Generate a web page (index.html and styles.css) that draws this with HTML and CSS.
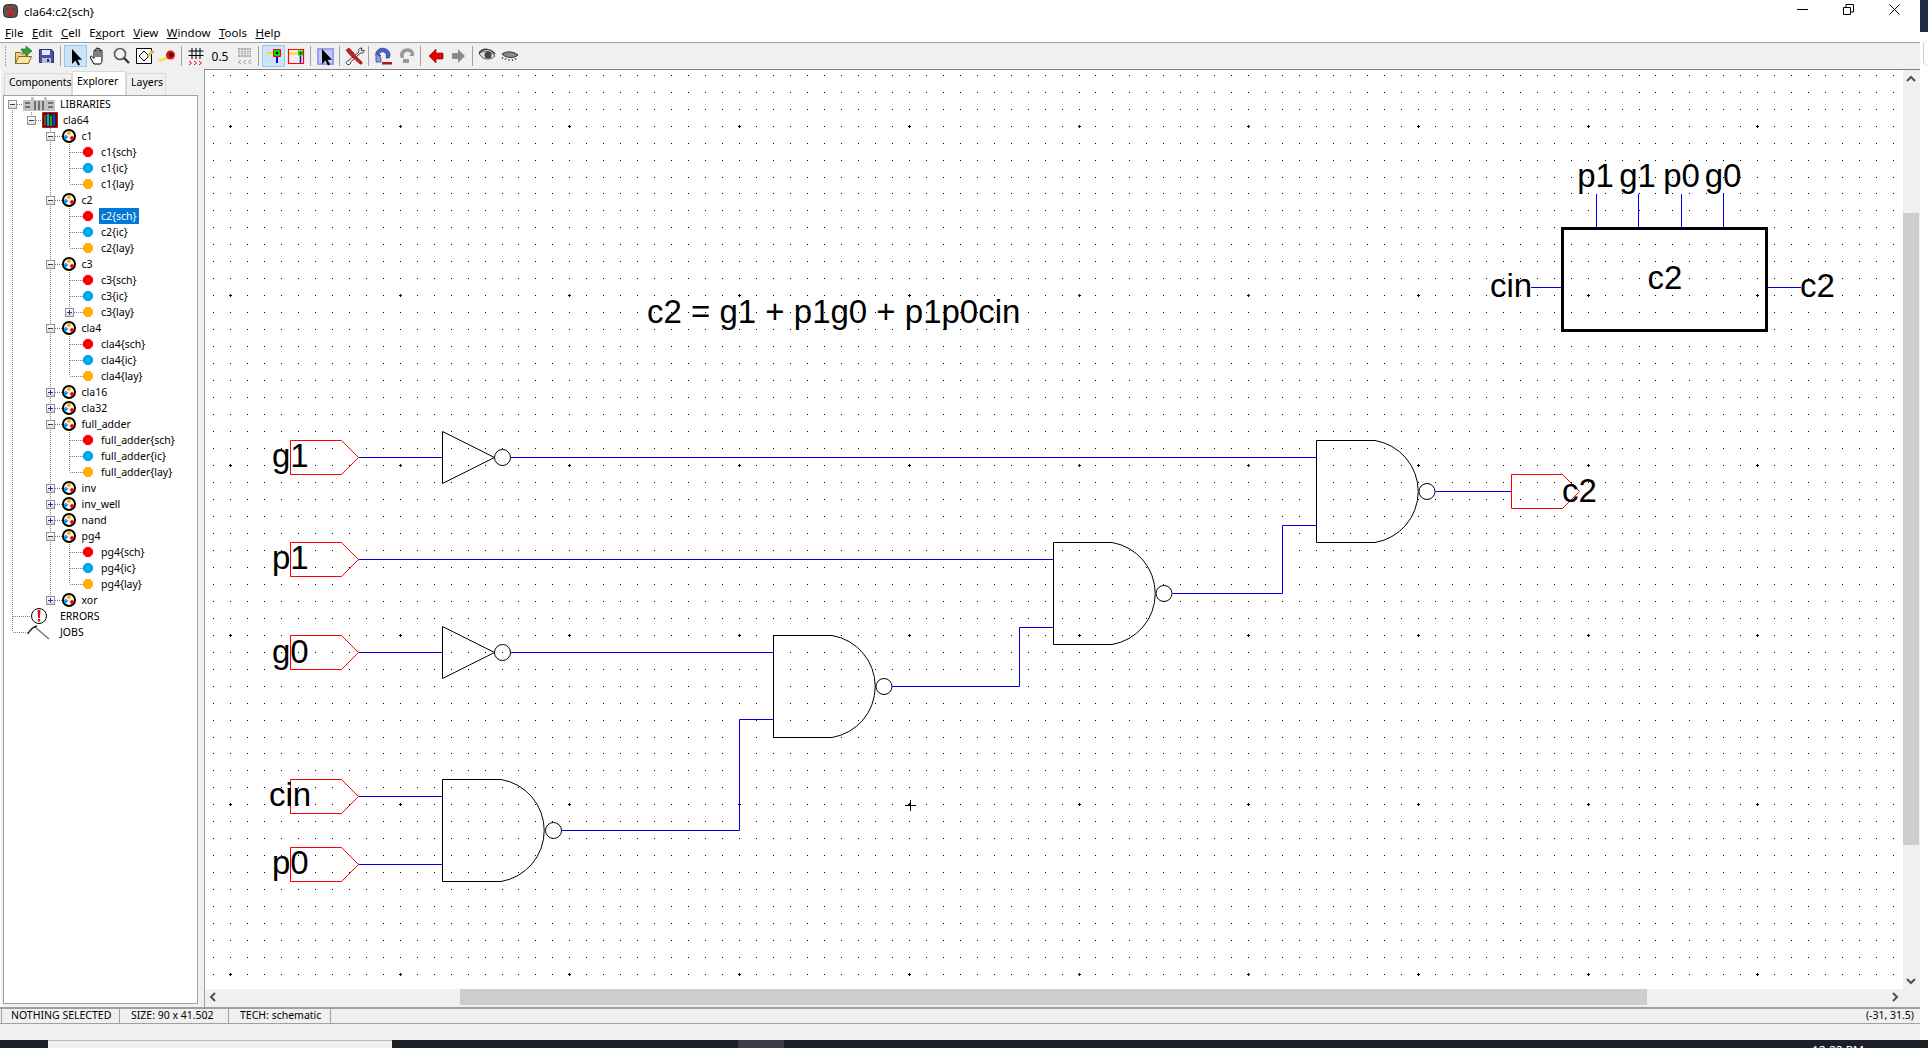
FILE: index.html
```html
<!DOCTYPE html>
<html>
  <head>
    <title>cla64:c2{sch}</title>
    <link rel="stylesheet" href="styles.css">
  </head>
  <body>
    <!-- Shared tree icons -->
    <svg class="defs" width="0" height="0">
      <symbol id="cell" viewBox="0 0 14 14">
        <circle cx="7" cy="7" r="6" fill="#fff" stroke="#000" stroke-width="2"/>
        <path d="M7 1.500l2.500 2.500-2.500 2.500-2.500-2.500z" fill="#ffb000"/>
        <path d="M4 5.500l2.500 2.500-2.500 2.500-2.500-2.500z" fill="#00a8ec"/>
        <path d="M10 6.500l2.500 2.500-2.500 2.500-2.500-2.500z" fill="#f00"/>
      </symbol>
      <symbol id="dot" viewBox="0 0 10 10">
        <path d="M3 0h4l3 3v4l-3 3H3L0 7V3z"/>
      </symbol>
    </svg>

    <div class="screen">
      <div class="app">
        <!-- Title bar -->
        <div class="titlebar">
          <svg class="app-icon" width="15" height="14" viewBox="0 0 15 14">
            <rect x="0.5" y="0.5" width="14" height="13" rx="4" fill="#555" stroke="#333"/>
            <path d="M3 4h3v3H3zM9 4h3v3H9zM5 9h5v3H5z" fill="#e01010"/>
          </svg>
          <span class="title-text">cla64:c2{sch}</span>
          <div class="win-btns">
            <svg width="11" height="11" viewBox="0 0 11 11"><path d="M0 5.500h11" stroke="#000"/></svg>
            <svg width="11" height="11" viewBox="0 0 11 11"><path d="M.5 3.500h7v7h-7zM3 3V.5h7.500V8H8" fill="none" stroke="#000"/></svg>
            <svg width="11" height="11" viewBox="0 0 11 11"><path d="M.5.500l10 10M10.500.500l-10 10" stroke="#000" fill="none"/></svg>
          </div>
        </div>

        <!-- Menu -->
        <div class="menubar">
          <span><u>F</u>ile</span>
          <span><u>E</u>dit</span>
          <span><u>C</u>ell</span>
          <span>E<u>x</u>port</span>
          <span><u>V</u>iew</span>
          <span><u>W</u>indow</span>
          <span><u>T</u>ools</span>
          <span><u>H</u>elp</span>
        </div>

        <!-- Toolbar -->
        <div class="toolbar">
          <div class="grip"></div>
          <div class="tb-btn">
            <svg viewBox="0 0 23 22"><path d="M3.500 18.500V7.500h5l1 1.500h6v2" fill="#f2d27a" stroke="#8a6a20"/><path d="M3.500 18.500l3-7h13l-3 7z" fill="#fbe6a0" stroke="#8a6a20"/><path d="M9 4h5V1l6 5-6 5V8H11z" fill="#2f9e3a" stroke="#1b6b25" stroke-width=".6"/></svg>
          </div>
          <div class="tb-btn">
            <svg viewBox="0 0 23 22"><path d="M4.500 4.500h12l2 2v11h-14z" fill="#4b4f9e" stroke="#2c2f70"/><path d="M7 5h8v5H7z" fill="#e6e6f2"/><path d="M7 13h9v5H7z" fill="#b9bbdc"/><path d="M12 14h2v3h-2z" fill="#2c2f70"/></svg>
          </div>
          <div class="tb-sep"></div>
          <div class="tb-btn on">
            <svg viewBox="0 0 23 22"><path d="M8 4v15l3.500-3.500 2.500 5 2-1-2.500-4.800H18z"/></svg>
          </div>
          <div class="tb-btn">
            <svg viewBox="0 0 23 22"><path d="M7 19l-3.500-6c-.8-1.500 1-2.500 2-1.200L7 13.500V6c0-1.500 2-1.500 2 0V4c0-1.500 2-1.500 2 0v.5c0-1.500 2-1.500 2 0V6c0-1.300 2-1.300 2 0v9c0 2-1 3-1.500 4z" fill="#fff" stroke="#000"/><path d="M9 6v6M11 5v7M13 5v7" stroke="#000" fill="none"/></svg>
          </div>
          <div class="tb-btn">
            <svg viewBox="0 0 23 22"><circle cx="10" cy="9" r="5.500" fill="#eef3f8" stroke="#555" stroke-width="1.600"/><path d="M14 13l5 5" stroke="#333" stroke-width="2.400"/></svg>
          </div>
          <div class="tb-btn">
            <svg viewBox="0 0 23 22"><path d="M3.500 3.500h15v15h-15z" fill="#fff" stroke="#000"/><path d="M6 11l5-5 5 5-5 5z" fill="none" stroke="#000"/><path d="M14 11l5-6 2 2-6 5z" fill="#f2c94c" stroke="#a8842a" stroke-width=".6"/></svg>
          </div>
          <div class="tb-btn">
            <svg viewBox="0 0 23 22"><path d="M3 16l10-4" stroke="#f5e020" stroke-width="2"/><circle cx="14.500" cy="10" r="4.500" fill="#e01010"/><circle cx="15" cy="10" r="2" fill="#111"/></svg>
          </div>
          <div class="tb-sep"></div>
          <div class="tb-btn slim">
            <svg viewBox="0 0 22 22"><path d="M7 3v11M11 3v11M15 3v11M3.500 6h15M3.500 10.500h15" stroke="#000" fill="none"/><path d="M4 16l2.500 2L4 20M9 16l2.500 2L9 20M14 16l2.500 2L14 20" stroke="#f00" fill="none"/></svg>
          </div>
          <div class="tb-scale">0.5</div>
          <div class="tb-btn">
            <svg viewBox="0 0 23 22"><path d="M5 3h13v9H5z" fill="#aaa"/><path d="M7.500 3v9M10.500 3v9M13.500 3v9M16 3v9M5 5.500h13M5 7.500h13M5 9.500h13" stroke="#f0f0f0" stroke-width=".7"/><path d="M8 15l-2.500 2L8 19M13 15l-2.500 2 2.500 2M18 15l-2.500 2 2.500 2" stroke="#999" fill="none"/></svg>
          </div>
          <div class="tb-sep"></div>
          <div class="tb-btn on">
            <svg viewBox="0 0 23 22"><path d="M4 8h7" stroke="#f5e020" stroke-width="2"/><path d="M11.500 4.500h7v7h-7z" fill="#00e000" stroke="#f00"/><path d="M14 7h2v2h-2z"/><path d="M15 12v6" stroke="#00f" stroke-width="2"/></svg>
          </div>
          <div class="tb-btn">
            <svg viewBox="0 0 23 22"><path d="M3.500 4.500h15v14h-15z" fill="none" stroke="#f00" stroke-width="1.200"/><path d="M4 8.500h9" stroke="#f5e020" stroke-width="2"/><path d="M13 5.500h5v5h-5z" fill="#00e000"/><path d="M15 7.500h1.500V9H15z"/><path d="M15.500 10.500V18" stroke="#00f" stroke-width="1.500"/></svg>
          </div>
          <div class="tb-sep"></div>
          <div class="tb-btn">
            <svg viewBox="0 0 23 22"><path d="M3 3h17v17H3z" fill="#9aa0f0"/><path d="M5 5h13v13H5z" fill="#c5c8f8"/><path d="M8 4v15l3.500-3.500 2.500 5 2-1-2.500-4.800H18z"/></svg>
          </div>
          <div class="tb-sep"></div>
          <div class="tb-btn">
            <svg viewBox="0 0 23 22"><path d="M19 3c-3 0-4 2-3 4l-11 9c-2 0-2.500 3 0 3.500 2 .3 3-1 2.500-2.500l10-9c2 1 4-1 3.500-3l-2 1-1-1z" fill="#fff" stroke="#333"/><path d="M3 5l3-2 4 4 2 3 7 7c1 1.500-1 3-2 2L9 12 6 9z" fill="#c81e1e" stroke="#6b0f0f" stroke-width=".5"/></svg>
          </div>
          <div class="tb-sep"></div>
          <div class="tb-btn">
            <svg viewBox="0 0 23 22"><path d="M4 8c1-4 6-6 10-4s5 6 3 9h-3c1-3 0-5-2-6-2-.800-4 0-5 2l2 2H4z" fill="#4a62c8" stroke="#25357e" stroke-width=".7"/><path d="M4 8l5 5v4H4z" fill="#8e9ee6" stroke="#25357e" stroke-width=".7"/><path d="M10 17h10v2.500H10z" fill="#b01818"/></svg>
          </div>
          <div class="tb-btn">
            <svg viewBox="0 0 23 22"><path d="M19 8c-1-4-6-6-10-4S4 10 6 13h3c-1-3 0-5 2-6 2-.800 4 0 5 2l-2 2h5z" fill="#999"/><path d="M8 14h6v4H8z" fill="#999"/></svg>
          </div>
          <div class="tb-sep"></div>
          <div class="tb-btn">
            <svg viewBox="0 0 23 22"><path d="M5 11l7-7v4h7v6h-7v4z" fill="#e60000" stroke="#8a0000" stroke-width=".6"/></svg>
          </div>
          <div class="tb-btn">
            <svg viewBox="0 0 23 22"><path d="M18 11l-7-7v4H5v6h6v4z" fill="#8c8c8c"/></svg>
          </div>
          <div class="tb-sep"></div>
          <div class="tb-btn">
            <svg viewBox="0 0 23 22"><path d="M3 9c4-4 11-4 16 2-3 3-8 4-12 2z" fill="#ddd" stroke="#555"/><circle cx="12" cy="10" r="3.500" fill="#444"/><path d="M3 8c4-5 11-5 16 1" stroke="#333" stroke-width="1.500" fill="none"/></svg>
          </div>
          <div class="tb-btn">
            <svg viewBox="0 0 23 22"><path d="M3 9c4-3 11-3 16 1-3 3-11 4-16-1z" fill="#888" stroke="#333"/><path d="M4 12l-1 2M7 13l-1 2M10 14v2M13 14l1 2M16 13l1 2" stroke="#333" fill="none"/></svg>
          </div>
        </div>

        <!-- Side panel and drawing -->
        <div class="main">
          <div class="side">
            <div class="tabs">
              <div class="tab">Components</div>
              <div class="tab active">Explorer</div>
              <div class="tab">Layers</div>
            </div>
            <div class="tree">
              <svg class="tree-lines" width="193" height="906" viewBox="4 96 193 906">
                <path d="M12.500 104V632M12.500 104H23M12.500 616H30M12.500 632H28M31.500 110V120M31.500 120H42M50.500 120V600
                  M50.500 136H62M50.500 200H62M50.500 264H62M50.500 328H62M50.500 392H62M50.500 408H62M50.500 424H62M50.500 488H62M50.500 504H62M50.500 520H62M50.500 536H62M50.500 600H62
                  M69.500 136V184M69.500 152H83M69.500 168H83M69.500 184H83
                  M69.500 200V248M69.500 216H83M69.500 232H83M69.500 248H83
                  M69.500 264V312M69.500 280H83M69.500 296H83M69.500 312H83
                  M69.500 328V376M69.500 344H83M69.500 360H83M69.500 376H83
                  M69.500 424V472M69.500 440H83M69.500 456H83M69.500 472H83
                  M69.500 536V584M69.500 552H83M69.500 568H83M69.500 584H83"/>
              </svg>

              <div class="row lv0"><span class="exp"></span>
                <svg class="ico-libs" width="32" height="16" viewBox="0 0 32 16"><path d="M0 4h8V1h3v3h10V1h3v3h8v11H0z" fill="#c4c4c4"/><path d="M2 6h5v2H2zM2 10h5v2H2zM11 5h2v9h-2zM15 5h2v9h-2zM19 5h2v9h-2zM25 6h5v2h-5zM25 10h5v2h-5z" fill="#707070"/></svg>
                <span class="lbl">LIBRARIES</span></div>
              <div class="row lv1"><span class="exp"></span>
                <svg class="ico-lib" width="16" height="16" viewBox="0 0 16 16"><path d="M.5.500h15v15H.500z" fill="#222" stroke="#f00"/><path d="M2 3h2v11H2z" fill="#7a4a10"/><path d="M5 2h2v12H5z" fill="#00a8ec"/><path d="M8 4h2v10H8z" fill="#1aa51a"/><path d="M11 2h2v12h-2z" fill="#1a3ae0"/></svg>
                <span class="lbl">cla64</span></div>

              <div class="row lv2"><span class="exp"></span><svg class="ico-cell"><use href="#cell"/></svg><span class="lbl">c1</span></div>
              <div class="row lv3"><span class="exp none"></span><svg class="ico-dot sch"><use href="#dot"/></svg><span class="lbl">c1{sch}</span></div>
              <div class="row lv3"><span class="exp none"></span><svg class="ico-dot ic"><use href="#dot"/></svg><span class="lbl">c1{ic}</span></div>
              <div class="row lv3"><span class="exp none"></span><svg class="ico-dot lay"><use href="#dot"/></svg><span class="lbl">c1{lay}</span></div>

              <div class="row lv2"><span class="exp"></span><svg class="ico-cell"><use href="#cell"/></svg><span class="lbl">c2</span></div>
              <div class="row lv3"><span class="exp none"></span><svg class="ico-dot sch"><use href="#dot"/></svg><span class="lbl sel">c2{sch}</span></div>
              <div class="row lv3"><span class="exp none"></span><svg class="ico-dot ic"><use href="#dot"/></svg><span class="lbl">c2{ic}</span></div>
              <div class="row lv3"><span class="exp none"></span><svg class="ico-dot lay"><use href="#dot"/></svg><span class="lbl">c2{lay}</span></div>

              <div class="row lv2"><span class="exp"></span><svg class="ico-cell"><use href="#cell"/></svg><span class="lbl">c3</span></div>
              <div class="row lv3"><span class="exp none"></span><svg class="ico-dot sch"><use href="#dot"/></svg><span class="lbl">c3{sch}</span></div>
              <div class="row lv3"><span class="exp none"></span><svg class="ico-dot ic"><use href="#dot"/></svg><span class="lbl">c3{ic}</span></div>
              <div class="row lv3"><span class="exp plus"></span><svg class="ico-dot lay"><use href="#dot"/></svg><span class="lbl">c3{lay}</span></div>

              <div class="row lv2"><span class="exp"></span><svg class="ico-cell"><use href="#cell"/></svg><span class="lbl">cla4</span></div>
              <div class="row lv3"><span class="exp none"></span><svg class="ico-dot sch"><use href="#dot"/></svg><span class="lbl">cla4{sch}</span></div>
              <div class="row lv3"><span class="exp none"></span><svg class="ico-dot ic"><use href="#dot"/></svg><span class="lbl">cla4{ic}</span></div>
              <div class="row lv3"><span class="exp none"></span><svg class="ico-dot lay"><use href="#dot"/></svg><span class="lbl">cla4{lay}</span></div>

              <div class="row lv2"><span class="exp plus"></span><svg class="ico-cell"><use href="#cell"/></svg><span class="lbl">cla16</span></div>
              <div class="row lv2"><span class="exp plus"></span><svg class="ico-cell"><use href="#cell"/></svg><span class="lbl">cla32</span></div>

              <div class="row lv2"><span class="exp"></span><svg class="ico-cell"><use href="#cell"/></svg><span class="lbl">full_adder</span></div>
              <div class="row lv3"><span class="exp none"></span><svg class="ico-dot sch"><use href="#dot"/></svg><span class="lbl">full_adder{sch}</span></div>
              <div class="row lv3"><span class="exp none"></span><svg class="ico-dot ic"><use href="#dot"/></svg><span class="lbl">full_adder{ic}</span></div>
              <div class="row lv3"><span class="exp none"></span><svg class="ico-dot lay"><use href="#dot"/></svg><span class="lbl">full_adder{lay}</span></div>

              <div class="row lv2"><span class="exp plus"></span><svg class="ico-cell"><use href="#cell"/></svg><span class="lbl">inv</span></div>
              <div class="row lv2"><span class="exp plus"></span><svg class="ico-cell"><use href="#cell"/></svg><span class="lbl">inv_well</span></div>
              <div class="row lv2"><span class="exp plus"></span><svg class="ico-cell"><use href="#cell"/></svg><span class="lbl">nand</span></div>

              <div class="row lv2"><span class="exp"></span><svg class="ico-cell"><use href="#cell"/></svg><span class="lbl">pg4</span></div>
              <div class="row lv3"><span class="exp none"></span><svg class="ico-dot sch"><use href="#dot"/></svg><span class="lbl">pg4{sch}</span></div>
              <div class="row lv3"><span class="exp none"></span><svg class="ico-dot ic"><use href="#dot"/></svg><span class="lbl">pg4{ic}</span></div>
              <div class="row lv3"><span class="exp none"></span><svg class="ico-dot lay"><use href="#dot"/></svg><span class="lbl">pg4{lay}</span></div>

              <div class="row lv2"><span class="exp plus"></span><svg class="ico-cell"><use href="#cell"/></svg><span class="lbl">xor</span></div>

              <div class="row lv0"><span class="exp none"></span>
                <svg class="ico-libs" width="32" height="16" viewBox="0 0 32 16"><circle cx="16" cy="8" r="7.500" fill="#fff" stroke="#000"/><path d="M14.500 2h3l-.6 8h-1.800zM14.800 11h2.400v2.600h-2.400z" fill="#e01010"/></svg>
                <span class="lbl">ERRORS</span></div>
              <div class="row lv0"><span class="exp none"></span>
                <svg class="ico-libs" width="32" height="16" viewBox="0 0 32 16"><path d="M12 3l14 12" stroke="#777" stroke-width="1.500" fill="none"/><path d="M5 10c2-4 5-7 9-8" stroke="#222" stroke-width="1.300" fill="none"/></svg>
                <span class="lbl">JOBS</span></div>
            </div>
          </div>

          <div class="drawing">
            <div class="drawing-top">
              <svg id="sheet" class="sheet" width="1698" height="919" viewBox="205 70 1698 919">
                <path id="grid" fill="#000" shape-rendering="crispEdges"/>

                <!-- Equation -->
                <text class="t-eq" x="647" y="323">c2 = g1 + p1g0 + p1p0cin</text>

                <!-- Cell icon -->
                <path class="wire thin" d="M1596.500 194V228M1638.500 194V228M1681.500 194V228M1723.500 194V228M1531 287.500H1562M1766 287.500H1801"/>
                <path class="icon-box" d="M1562.500 228.500H1766.500V330.500H1562.500Z"/>
                <text class="t-pin" text-anchor="middle" x="1595.500" y="187">p1</text>
                <text class="t-pin" text-anchor="middle" x="1637.500" y="187">g1</text>
                <text class="t-pin" text-anchor="middle" x="1681.500" y="187">p0</text>
                <text class="t-pin" text-anchor="middle" x="1723" y="187">g0</text>
                <text class="t-pin" text-anchor="middle" x="1665" y="289">c2</text>
                <text class="t-pin" x="1490" y="297">cin</text>
                <text class="t-pin" x="1800" y="297">c2</text>

                <!-- Wires -->
                <path class="wire" d="M358.500 457.500H442.500M510.500 457.500H1316.500
                  M358.500 559.500H1053.500
                  M358.500 652.500H442.500M510.500 652.500H773.500
                  M358.500 796.500H442.500M358.500 864.500H442.500
                  M561.500 830.500H739.500V719.500H773.500
                  M892.500 686.500H1019.500V627.500H1053.500
                  M1172.500 593.500H1282.500V525.500H1316.500
                  M1435.500 491.500H1511.500"/>

                <!-- Exports -->
                <path class="export" d="M290.500 440.500H341.500L358.500 457.500L341.500 474.500H290.500Z"/>
                <path class="export" d="M290.500 542.500H341.500L358.500 559.500L341.500 576.500H290.500Z"/>
                <path class="export" d="M290.500 635.500H341.500L358.500 652.500L341.500 669.500H290.500Z"/>
                <path class="export" d="M290.500 779.500H341.500L358.500 796.500L341.500 813.500H290.500Z"/>
                <path class="export" d="M290.500 847.500H341.500L358.500 864.500L341.500 881.500H290.500Z"/>
                <path class="export" d="M1511.500 474.500H1562.500L1579.500 491.500L1562.500 508.500H1511.500Z"/>

                <text class="t-exp" x="272" y="467">g1</text>
                <text class="t-exp" x="272" y="569">p1</text>
                <text class="t-exp" x="272" y="663">g0</text>
                <text class="t-exp" x="269" y="806">cin</text>
                <text class="t-exp" x="272" y="874">p0</text>
                <text class="t-exp" x="1562" y="502">c2</text>

                <!-- Inverters -->
                <path class="gate" d="M442.500 431.500L494.500 457.500L442.500 483.500Z"/>
                <circle class="gate" cx="502.500" cy="457.500" r="8"/>
                <path class="gate" d="M442.500 626.500L494.500 652.500L442.500 678.500Z"/>
                <circle class="gate" cx="502.500" cy="652.500" r="8"/>

                <!-- NAND gates -->
                <path class="gate" d="M442.500 779.500H501A51.700 51.700 0 0 1 501 881.500H442.500Z"/>
                <circle class="gate" cx="553.500" cy="830.500" r="8"/>
                <path class="gate" d="M773.500 635.500H832A51.700 51.700 0 0 1 832 737.500H773.500Z"/>
                <circle class="gate" cx="884" cy="686.500" r="8"/>
                <path class="gate" d="M1053.500 542.500H1112A51.700 51.700 0 0 1 1112 644.500H1053.500Z"/>
                <circle class="gate" cx="1164" cy="593.500" r="8"/>
                <path class="gate" d="M1316.500 440.500H1375A51.700 51.700 0 0 1 1375 542.500H1316.500Z"/>
                <circle class="gate" cx="1427" cy="491.500" r="8"/>

                <!-- Mouse cursor -->
                <path class="gate" d="M910.500 800V811M905 805.500H916"/>
              </svg>

              <div class="vscroll">
                <svg class="sb-arrow" width="16" height="17" viewBox="0 0 16 17"><path d="M4 11l4-4 4 4" fill="none" stroke="#505050" stroke-width="2"/></svg>
                <div class="v-gap"></div>
                <div class="v-thumb"></div>
                <div class="fill"></div>
                <svg class="sb-arrow" width="16" height="17" viewBox="0 0 16 17"><path d="M4 7l4 4 4-4" fill="none" stroke="#505050" stroke-width="2"/></svg>
              </div>
            </div>
            <div class="hscroll">
              <svg class="sb-arrow" width="17" height="16" viewBox="0 0 17 16"><path d="M10 4L6 8l4 4" fill="none" stroke="#505050" stroke-width="2"/></svg>
              <div class="h-gap"></div>
              <div class="h-thumb"></div>
              <div class="fill"></div>
              <svg class="sb-arrow" width="17" height="16" viewBox="0 0 17 16"><path d="M7 4l4 4-4 4" fill="none" stroke="#505050" stroke-width="2"/></svg>
            </div>
          </div>
        </div>

        <!-- Status bar -->
        <div class="status">
          <div class="cell c-sel">NOTHING SELECTED</div>
          <div class="cell c-size">SIZE: 90 x 41.502</div>
          <div class="cell c-tech">TECH: schematic</div>
          <div class="coords">(-31, 31.5)</div>
        </div>
        <div class="status-low"></div>
      </div>

      <!-- Edge of the window behind -->
      <div class="behind">
        <div class="behind-top"></div>
        <div class="behind-ring"></div>
      </div>
    </div>

    <!-- Task bar, only its top edge is on the screen -->
    <div class="taskbar">
      <div class="tk dark s1"></div>
      <div class="tk light s2"></div>
      <div class="tk dark s3"></div>
      <div class="tk mid s4"></div>
      <div class="tk dark s5"><span class="clock">12:22 PM</span></div>
    </div>

    <script src="grid.js"></script>
  </body>
</html>
```

FILE: styles.css
```css
* {
  box-sizing: border-box;
}
html,
body {
  margin: 0;
  padding: 0;
}
body {
  width: 1928px;
  height: 1048px;
  overflow: hidden;
  background: #fff;
  font-family: "Noto Sans", sans-serif;
  font-size: 10.5px;
  color: #000;
}
.defs {
  position: absolute;
}
.screen {
  display: flex;
  height: 1040px;
}
.app {
  width: 1920px;
  display: flex;
  flex-direction: column;
}

/* Title bar and menu */
.titlebar {
  height: 22px;
  display: flex;
  align-items: center;
  padding: 0 0 0 3px;
  background: #fff;
}
.app-icon {
  margin-right: 6px;
}
.title-text {
  font-size: 11.5px;
  flex: 1;
}
.win-btns {
  display: flex;
  gap: 35px;
  padding-right: 20px;
  margin-top: -3px;
}
.menubar {
  height: 21px;
  display: flex;
  align-items: center;
  padding-left: 5px;
  gap: 8.5px;
  font-size: 11.5px;
  background: #fff;
  border-bottom: 1px solid #a0a0a0;
}

/* Toolbar */
.toolbar {
  height: 26px;
  display: flex;
  align-items: center;
  background: #f0f0f0;
}
.grip {
  width: 12px;
  height: 21px;
  background: radial-gradient(circle at 5.500px 1px, #a8a8a8 1px, transparent 1px) 0 0 / 12px 3px;
}
.tb-btn {
  width: 23px;
  height: 22px;
  flex: none;
}
.tb-btn svg {
  display: block;
  width: 100%;
  height: 100%;
}
.tb-btn.slim {
  width: 22px;
}
.tb-btn.on {
  background: #cce4f7;
  box-shadow: inset 0 0 0 1px #99c9ef;
}
.tb-sep {
  width: 1px;
  height: 20px;
  margin: 0 3px 0 2px;
  background: #a0a0a0;
  flex: none;
}
.tb-scale {
  width: 26px;
  text-align: center;
  font-size: 12px;
  flex: none;
}

/* Main area */
.main {
  flex: 1;
  min-height: 0;
  display: flex;
}
.side {
  width: 204px;
  display: flex;
  flex-direction: column;
  background: #f0f0f0;
  padding: 1px 6px 3px 3px;
  border-left: 1px solid #fff;
}
.tabs {
  height: 25px;
  display: flex;
  align-items: flex-end;
}
.tab {
  height: 22px;
  padding: 0 3px;
  background: #f0f0f0;
  border: 1px solid #d9d9d9;
  border-bottom: none;
  line-height: 17px;
}
.tab:first-child {
  width: 68px;
  padding-left: 4px;
  letter-spacing: -0.1px;
}
.tab.active {
  width: 54px;
  height: 25px;
  margin-bottom: -1px;
  position: relative;
  padding: 1px 0 0 4px;
  line-height: 16px;
  background: #fff;
}
.tab:last-child {
  width: 40px;
  padding-left: 4px;
}
.tree {
  flex: 1;
  position: relative;
  background: #fff;
  border: 1px solid #a0a0a0;
  overflow: hidden;
  margin-left: -1px;
}
.tree-lines {
  position: absolute;
  left: 0;
  top: 0;
  fill: none;
  stroke: #808080;
  stroke-dasharray: 1 1;
  shape-rendering: crispEdges;
}
.row {
  position: relative;
  height: 16px;
  display: flex;
  align-items: center;
  white-space: nowrap;
}
.lv0 {
  padding-left: 4px;
}
.lv1 {
  padding-left: 23px;
}
.lv2 {
  padding-left: 42px;
}
.lv3 {
  padding-left: 61px;
}
.exp {
  position: relative;
  width: 9px;
  height: 9px;
  flex: none;
  background: linear-gradient(#fff, #dcdcdc);
  border: 1px solid #919191;
}
.exp::before {
  content: "";
  position: absolute;
  left: 1px;
  top: 3px;
  width: 5px;
  height: 1px;
  background: #1e3c8c;
}
.exp.plus::after {
  content: "";
  position: absolute;
  left: 3px;
  top: 1px;
  width: 1px;
  height: 5px;
  background: #1e3c8c;
}
.exp.none {
  visibility: hidden;
}
.ico-libs {
  margin: 0 4px 0 6px;
  flex: none;
}
.ico-lib {
  margin: 0 4px 0 6px;
  flex: none;
}
.ico-cell {
  width: 14px;
  height: 14px;
  margin: 0 4.5px 0 7px;
  flex: none;
}
.ico-dot {
  width: 10px;
  height: 10px;
  margin: 0 6px 0 9px;
  flex: none;
}
.sch {
  fill: #f00;
}
.ic {
  fill: #00a8ec;
}
.lay {
  fill: #ffb000;
}
.lbl {
  padding: 0 1px;
  height: 16px;
  line-height: 16px;
}
.lv3 .lbl {
  padding: 0 2px;
}
.lbl.sel {
  background: #0078d7;
  color: #fff;
}

/* Drawing */
.drawing {
  flex: 1;
  min-width: 0;
  display: flex;
  flex-direction: column;
  border-left: 1px solid #a0a0a0;
  border-top: 1px solid #808080;
  background: #f0f0f0;
  padding-right: 1px;
}
.drawing-top {
  display: flex;
  height: 919px;
}
.sheet {
  display: block;
  flex: none;
  background: #fff;
}
.wire {
  fill: none;
  stroke: #0000e8;
  stroke-width: 1;
}
.wire.thin {
  stroke: #0000f0;
}
.export {
  fill: none;
  stroke: #f00;
  stroke-width: 1;
}
.gate {
  fill: none;
  stroke: #000;
  stroke-width: 1;
}
.icon-box {
  fill: none;
  stroke: #000;
  stroke-width: 3;
}
.t-eq,
.t-pin,
.t-exp {
  font-family: "Liberation Sans", sans-serif;
  font-size: 33px;
  fill: #000;
}

/* Scrollbars */
.vscroll {
  width: 16px;
  display: flex;
  flex-direction: column;
  background: #f0f0f0;
}
.v-gap {
  height: 126px;
}
.v-thumb {
  height: 632px;
  background: #cdcdcd;
}
.fill {
  flex: 1;
}
.sb-arrow {
  display: block;
  flex: none;
}
.hscroll {
  width: 1698px;
  height: 16px;
  display: flex;
}
.h-gap {
  width: 238px;
}
.h-thumb {
  width: 1187px;
  background: #cdcdcd;
}

/* Status bar */
.status {
  height: 17px;
  display: flex;
  padding-left: 1px;
  background: #f0f0f0;
  border-top: 2px solid #a0a0a0;
  border-bottom: 1px solid #a0a0a0;
  line-height: 13px;
}
.cell {
  padding-left: 9px;
  border-left: 1px solid #a0a0a0;
  border-right: 1px solid #a0a0a0;
  margin-right: -1px;
}
.c-sel {
  width: 119px;
}
.c-size {
  width: 110px;
  padding-left: 11px;
}
.c-tech {
  width: 103px;
  padding-left: 11px;
}
.coords {
  margin-left: auto;
  padding-right: 6px;
}
.status-low {
  height: 16px;
  background: #f0f0f0;
}
.behind {
  flex: 1;
  position: relative;
  background: #fff;
}
.behind-top {
  height: 32px;
  background: #1f2a44;
}
.behind-ring {
  margin-top: 8px;
  height: 26px;
  border-left: 1px solid #ccc;
  border-radius: 14px 0 0 14px;
  margin-left: 3px;
  border-bottom: 1px solid #e0e0e0;
}

/* Task bar */
.taskbar {
  height: 8px;
  display: flex;
  overflow: hidden;
}
.dark {
  background: #1b2026;
}
.light {
  background: #f0f0f0;
  border-top: 1px solid #b8b8b8;
}
.mid {
  background: #3a3e44;
}
.s1 {
  width: 48px;
}
.s2 {
  width: 344px;
}
.s3 {
  width: 346px;
}
.s4 {
  width: 46px;
}
.s5 {
  flex: 1;
  padding-left: 1028px;
}
.clock {
  display: block;
  color: #fff;
  font-size: 12px;
  line-height: 22px;
}
```

FILE: grid.js
```js
// Grid of the schematic window: a dot every 16.97px, a small cross every tenth
const STEP = 16.97;
const X0 = 230;
const Y0 = 465;

let d = "";
for (let i = -1; i <= 99; i++) {
  for (let j = -23; j <= 30; j++) {
    const x = Math.round(X0 + i * STEP);
    const y = Math.round(Y0 + j * STEP);
    if (x < 205 || y < 70) continue;
    d += `M${x} ${y}h1v1h-1z`;
    if (i % 10 === 0 && j % 10 === 0) {
      d += `M${x - 1} ${y}h3v1h-3zM${x} ${y - 1}h1v3h-1z`;
    }
  }
}
document.getElementById("grid").setAttribute("d", d);
```
